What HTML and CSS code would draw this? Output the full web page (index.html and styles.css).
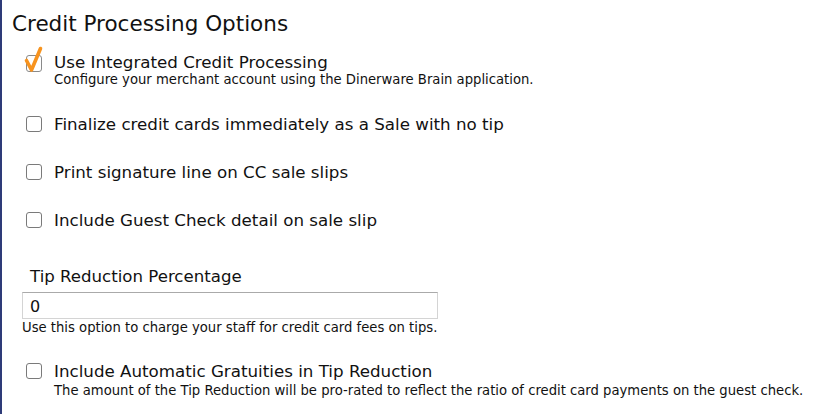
FILE: index.html
```html
<!DOCTYPE html>
<html lang="en">
<head>
    <meta charset="UTF-8">
    <meta name="viewport" content="width=device-width, initial-scale=1.0">
    <title>Credit Processing Options</title>
    <link rel="stylesheet" href="styles.css">
</head>
<body>

    <div class="panel">
        <h1>Credit Processing Options</h1>

        <div class="option first">
            <span class="box checked">
                <svg width="20" height="28" viewBox="0 0 20 28">
                    <path d="M2.5 14.5 L7.5 24 L16.5 2.5" fill="none" stroke="#f7931e" stroke-width="3.6" stroke-linecap="round" stroke-linejoin="round"/>
                </svg>
            </span>
            <div class="text">
                <label>Use Integrated Credit Processing</label>
                <p class="note">Configure your merchant account using the Dinerware Brain application.</p>
            </div>
        </div>

        <div class="option">
            <span class="box"></span>
            <div class="text"><label>Finalize credit cards immediately as a Sale with no tip</label></div>
        </div>

        <div class="option">
            <span class="box"></span>
            <div class="text"><label>Print signature line on CC sale slips</label></div>
        </div>

        <div class="option">
            <span class="box"></span>
            <div class="text"><label>Include Guest Check detail on sale slip</label></div>
        </div>

        <div class="field">
            <label for="tipReduction">Tip Reduction Percentage</label>
            <input type="text" id="tipReduction" value="0">
            <p class="note">Use this option to charge your staff for credit card fees on tips.</p>
        </div>

        <div class="option last">
            <span class="box"></span>
            <div class="text">
                <label>Include Automatic Gratuities in Tip Reduction</label>
                <p class="note">The amount of the Tip Reduction will be pro-rated to reflect the ratio of credit card payments on the guest check.</p>
            </div>
        </div>
    </div>

</body>
</html>
```

FILE: styles.css
```css
body {
    font-family: "DejaVu Sans", Verdana, sans-serif;
    background-color: white;
    color: #111;
    margin: 0;
}

.panel {
    border-left: 2px solid #2e3b78;
    height: 414px;
    padding: 11px 0 0 10px;
    box-sizing: border-box;
}

h1 {
    font-size: 21.5px;
    font-weight: normal;
    margin: 0 0 15px 0;
    line-height: 26px;
}

.option {
    display: flex;
    align-items: flex-start;
    gap: 12px;
    padding-left: 14px;
    margin-bottom: 28px;
}

.option.first {
    margin-bottom: 27px;
}

.box {
    width: 14px;
    height: 14px;
    border: 1px solid #7a7a7a;
    border-radius: 3px;
    margin-top: 2px;
    position: relative;
    flex-shrink: 0;
}

.box.checked {
    margin-top: 3px;
    height: 15px;
    border-color: #8a8a8a;
}

.box svg {
    position: absolute;
    left: -3px;
    top: -10px;
}

.text label {
    font-size: 16.7px;
    line-height: 20px;
    display: block;
}

.note {
    font-size: 13.2px;
    margin: 0;
    line-height: 15px;
}

.option.last .note {
    margin-top: 2px;
}

.field {
    padding-left: 10px;
    margin-top: 37px;
    margin-bottom: 26px;
}

.field label {
    font-size: 16.6px;
    display: block;
    margin: 0 0 5px 8px;
    line-height: 20px;
}

.field input {
    display: block;
    width: 416px;
    height: 27px;
    box-sizing: border-box;
    border: 1px solid #d4d4d4;
    border-top-color: #aaa;
    font-family: inherit;
    font-size: 16px;
    color: #111;
    padding: 2px 7px 0 7px;
    outline: none;
}

.field .note {
    margin-top: 1px;
}
```
